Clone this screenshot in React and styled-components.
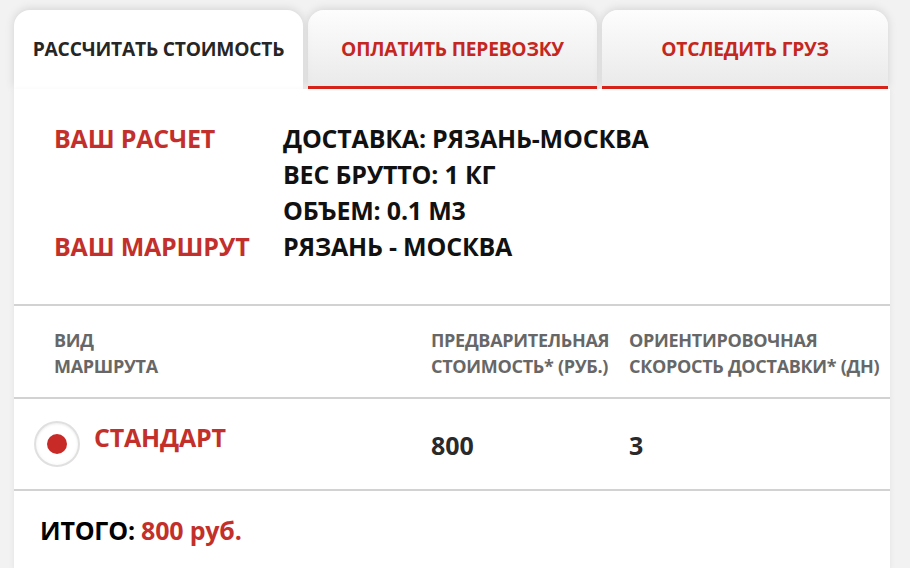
import React from "react";
import styled, { createGlobalStyle } from "styled-components";

const Global = createGlobalStyle`
  html, body { margin: 0; padding: 0; background: #f2f2f2; }
  body { font-family: "Open Sans", "Liberation Sans", sans-serif; }
`;

const Page = styled.div`
  width: 876px;
  margin-left: 14px;
  padding-top: 10px;
`;

const Tabs = styled.div`
  display: flex;
  gap: 5px;
  align-items: flex-start;
`;

const Tab = styled.div`
  position: relative;
  flex: 0 0 ${(p) => p.$w}px;
  height: 79px;
  border-radius: 16px 16px 0 0;
  display: flex;
  align-items: center;
  justify-content: center;
  padding-bottom: ${(p) => (p.$active ? 3 : 0)}px;
  box-sizing: border-box;
  background: ${(p) =>
    p.$active ? "#ffffff" : "linear-gradient(#fdfdfd, #eaeaea)"};
  border-bottom: ${(p) => (p.$active ? "none" : "3px solid #d8241b")};
  box-shadow: 0 -1px 10px rgba(0, 0, 0, 0.13);
  color: ${(p) => (p.$active ? "#262626" : "#c4271f")};
  font-size: 19.2px;
  font-weight: 700;
  letter-spacing: -0.2px;
  white-space: nowrap;
  z-index: ${(p) => (p.$active ? 2 : 1)};
`;

const Panel = styled.div`
  background: #fff;
  box-shadow: 0 2px 6px rgba(0, 0, 0, 0.07);
  position: relative;
  z-index: 3;
`;

const Summary = styled.div`
  display: grid;
  grid-template-columns: 229px 1fr;
  padding: 31px 40px 40px;
  font-size: 25px;
  font-weight: 700;
  line-height: 36px;
  letter-spacing: -0.2px;
`;

const Label = styled.div`
  color: #c3302b;
`;

const Values = styled.div`
  color: #111;
`;

const Divider = styled.div`
  height: 2px;
  background: #d2d2d2;
`;

const Row = styled.div`
  display: grid;
  grid-template-columns: 417px 198px 1fr;
  height: ${(p) => p.$h}px;
  box-sizing: border-box;
  padding-top: ${(p) => p.$pt}px;
`;

const HeadCell = styled.div`
  color: #676767;
  font-size: 18px;
  font-weight: 700;
  line-height: 26px;
  letter-spacing: -0.3px;
  padding-left: ${(p) => p.$pl || 0}px;
  white-space: nowrap;
`;

const Route = styled.label`
  display: flex;
  align-items: flex-start;
  gap: 14px;
  padding-left: 20px;
  color: #c3302b;
  font-size: 25px;
  font-weight: 700;
  line-height: 36px;
  letter-spacing: -0.2px;
`;

const Radio = styled.span`
  width: 46px;
  height: 46px;
  box-sizing: border-box;
  border-radius: 50%;
  border: 2px solid #e0e0e0;
  background: radial-gradient(circle, #ffffff 60%, #f0f0f0 100%);
  box-shadow: inset 0 1px 2px rgba(0, 0, 0, 0.06);
  display: flex;
  align-items: center;
  justify-content: center;
  margin-top: 2px;
  &::after {
    content: "";
    width: 20px;
    height: 20px;
    border-radius: 50%;
    background: #c82a27;
  }
`;

const Value = styled.div`
  color: #2a2a2a;
  font-size: 25px;
  font-weight: 700;
  line-height: 36px;
  padding-top: ${(p) => p.$pt || 0}px;
`;

const Total = styled.div`
  padding: 21px 26px 0;
  height: 77px;
  box-sizing: border-box;
  font-size: 25px;
  font-weight: 700;
  line-height: 36px;
  letter-spacing: -0.2px;
  color: #000;
`;

const Red = styled.span`
  color: #c3302b;
`;

export default function App() {
  return (
    <>
      <Global />
      <Page>
        <Tabs>
          <Tab $w={289} $active>РАССЧИТАТЬ СТОИМОСТЬ</Tab>
          <Tab $w={289}>ОПЛАТИТЬ ПЕРЕВОЗКУ</Tab>
          <Tab $w={286}>ОТСЛЕДИТЬ ГРУЗ</Tab>
        </Tabs>
        <Panel>
          <Summary>
            <Label>ВАШ РАСЧЕТ</Label>
            <Values>
              <div>ДОСТАВКА: РЯЗАНЬ-МОСКВА</div>
              <div>ВЕС БРУТТО: 1 КГ</div>
              <div>ОБЪЕМ: 0.1 М3</div>
            </Values>
            <Label>ВАШ МАРШРУТ</Label>
            <Values>РЯЗАНЬ - МОСКВА</Values>
          </Summary>
          <Divider />
          <Row $h={91} $pt={21}>
            <HeadCell $pl={40}>
              ВИД
              <br />
              МАРШРУТА
            </HeadCell>
            <HeadCell>
              ПРЕДВАРИТЕЛЬНАЯ
              <br />
              СТОИМОСТЬ* (РУБ.)
            </HeadCell>
            <HeadCell>
              ОРИЕНТИРОВОЧНАЯ
              <br />
              СКОРОСТЬ ДОСТАВКИ* (ДН)
            </HeadCell>
          </Row>
          <Divider />
          <Row $h={90} $pt={20}>
            <Route>
              <Radio />
              СТАНДАРТ
            </Route>
            <Value $pt={8}>800</Value>
            <Value $pt={8}>3</Value>
          </Row>
          <Divider />
          <Total>
            ИТОГО: <Red>800 руб.</Red>
          </Total>
        </Panel>
      </Page>
    </>
  );
}
